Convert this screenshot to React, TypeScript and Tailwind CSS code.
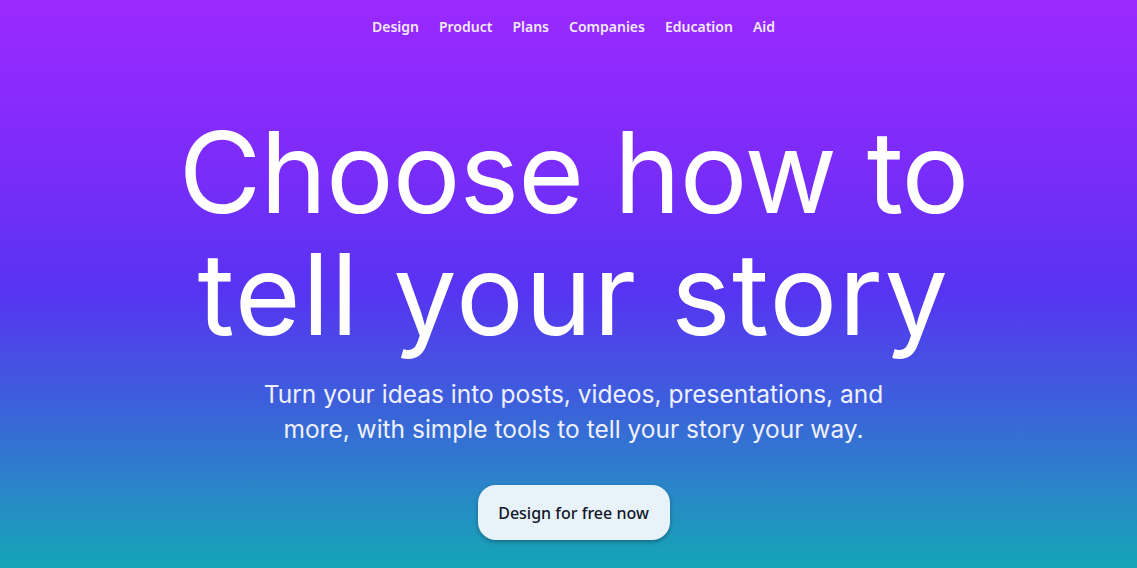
const navItems = ['Design', 'Product', 'Plans', 'Companies', 'Education', 'Aid'];

export default function App() {
  return (
    <div className="h-[568px] w-full overflow-hidden bg-[linear-gradient(180deg,#9b29ff_0%,#7a2cfa_30%,#5733f2_51%,#3b62da_72%,#2a86c8_86%,#14a6b6_100%)] pl-[10px] font-['Inter',sans-serif] text-white">
      <nav className="flex justify-center gap-5 pt-[17px] font-['Noto_Sans',sans-serif] text-[14px] font-semibold text-[#f1e9ff]">
        {navItems.map((item) => (
          <a key={item} href="#" className="leading-5">
            {item}
          </a>
        ))}
      </nav>

      <main className="flex flex-col items-center">
        <h1 className="mt-[74px] text-center text-[113px] font-normal leading-[122px] tracking-[-1px]">
          Choose how to
          <br />
          <span className="tracking-[1.5px]">tell your story</span>
        </h1>
        <p className="mt-[22px] text-center text-[24.5px] leading-[35px] text-[#eef0ff]">
          Turn your ideas into posts, videos, presentations, and
          <br />
          more, with simple tools to tell your story your way.
        </p>
        <button className="mt-[38px] h-[55px] w-[192px] rounded-[18px] bg-[#e8f3f9] font-['Noto_Sans',sans-serif] text-[16px] font-medium text-[#12162a] shadow-[0_2px_4px_rgba(0,0,0,0.3)]">
          Design for free now
        </button>
      </main>
    </div>
  );
}
